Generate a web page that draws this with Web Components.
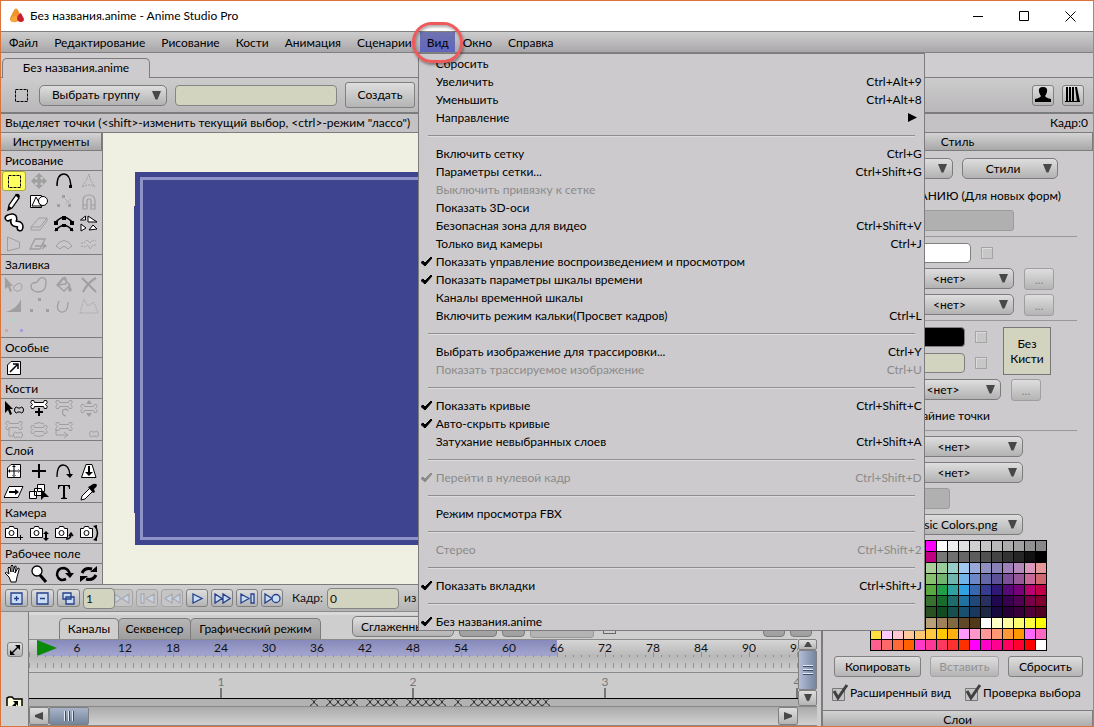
<!DOCTYPE html>
<html lang="ru">
<head>
<meta charset="utf-8">
<title>Без названия.anime - Anime Studio Pro</title>
<style>
body{margin:0;font:12px/18px Lato,"Open Sans",sans-serif;color:#000;background:#cfcdcf}
</style>
</head>
<body>
<studio-app></studio-app>
<script>
const base = `*{box-sizing:border-box}button,input,select{font:inherit;color:inherit;margin:0}button{cursor:default}
.btn{border:1px solid #808080;border-radius:3px;background:linear-gradient(#dedede,#b4b4b4);padding:0}`;
const define = (name, html) => customElements.define(name, class extends HTMLElement {
  constructor() {
    super();
    const t = document.createElement('template');
    t.innerHTML = `<style>${base}</style>` + (typeof html === 'function' ? html(this) : html);
    this.attachShadow({mode: 'open'}).append(t.content.cloneNode(true));
  }
});

/* ---------- small controls ---------- */
define('drop-select', el => `<style>
:host{display:block;position:relative;height:21px;flex:none}
select{appearance:none;width:100%;height:100%;border:1px solid #7c7c7c;border-radius:5px;background:linear-gradient(#dedede,#b2b2b2);text-align:center;text-align-last:center;padding:0 18px 0 var(--lead,4px);line-height:18px;display:block}
svg{position:absolute;right:6px;top:6px;pointer-events:none}
</style><select aria-label="${el.getAttribute('label')}"><option>${el.getAttribute('value') || ''}</option></select>
<svg width="9" height="9"><path d="M0 0h9L5.500 8.500h-2z" fill="#484848"/></svg>`);

define('header-strip', `<style>:host{display:block;height:19px;line-height:18px;text-align:center;border:1px solid #7c7c7c;border-left:0;background:linear-gradient(#d4d3d4,#a9a8a9);overflow:hidden}</style><slot></slot>`);

/* ---------- title bar ---------- */
define('title-bar', `<style>
:host{display:flex;align-items:center;height:30px;background:#fff;padding-left:8px;color:#000}
span{margin-left:5px;flex:1}
.w{width:46px;height:30px;border:0;background:none;padding:0;display:grid;place-items:center}
</style>
<svg width="16" height="16" viewBox="0 0 16 16"><path d="M1 10 5 2q2-3 4 0l3 6q-1 4-5 6-6 1-6-4z" fill="#f0932b"/><path d="M5 8q3-1 4 3-1 3-4 3-4 0-4-3z" fill="#f5a83c"/><path d="M12 5q1 2 3 6 0 3-3 3-4 0-4-4 1-4 4-5z" fill="#c8202c"/></svg>
<span>Без названия.anime - Anime Studio Pro</span>
<button class="w" aria-label="Свернуть"><svg width="11" height="11"><path d="M0 5.500h10" stroke="#000"/></svg></button>
<button class="w" aria-label="Развернуть"><svg width="11" height="11"><path d="M.5.500h9v9h-9z" fill="none" stroke="#000"/></svg></button>
<button class="w" aria-label="Закрыть"><svg width="11" height="11"><path d="m.5.500 10 10m0-10-10 10" stroke="#000"/></svg></button>`);

/* ---------- menus ---------- */
const viewMenu = [
 ['Сбросить'],['Увеличить','Ctrl+Alt+9'],['Уменьшить','Ctrl+Alt+8'],['Направление','▶'],null,
 ['Включить сетку','Ctrl+G'],['Параметры сетки...','Ctrl+Shift+G'],['Выключить привязку к сетке','','d'],['Показать 3D-оси'],
 ['Безопасная зона для видео','Ctrl+Shift+V'],['Только вид камеры','Ctrl+J'],['Показать управление воспроизведением и просмотром','','c'],
 ['Показать параметры шкалы времени','','c'],['Каналы временной шкалы'],['Включить режим кальки(Просвет кадров)','Ctrl+L'],null,
 ['Выбрать изображение для трассировки...','Ctrl+Y'],['Показать трассируемое изображение','Ctrl+U','d'],null,
 ['Показать кривые','Ctrl+Shift+C','c'],['Авто-скрыть кривые','','c'],['Затухание невыбранных слоев','Ctrl+Shift+A'],null,
 ['Перейти в нулевой кадр','Ctrl+Shift+D','cd'],null,['Режим просмотра FBX'],null,['Стерео','Ctrl+Shift+2','d'],null,
 ['Показать вкладки','Ctrl+Shift+J','c'],null,['Без названия.anime','','c']];
define('drop-menu', () => `<style>
:host{display:block;width:507px;border:1px solid #7c7c7c;background:#cccacc;color:#000}
ul{list-style:none;margin:0;padding:0}
li{height:18px}
button{display:flex;width:100%;height:18px;border:0;background:none;padding:1px 2px 0;line-height:17px;text-align:left;align-items:center}
i{width:15px;height:17px;flex:none;display:flex;align-items:center}
span{flex:1}
button:disabled{color:#8b8a8b}
hr{margin:0 9px;border:0;height:10px;border-bottom:1px solid #8f8f8f;box-shadow:0 1px #dddcdd}
.arrow{padding-right:5px}
</style><ul role="menu">${viewMenu.map(m => m ? `<li><button role="menuitem" ${(m[2]||'').includes('d')?'disabled':''}><i>${
 (m[2]||'').includes('c')?'<svg width="12" height="11"><path d="M0 6.500 2 5l2 2 6-6 1 1-7 8z" fill="currentColor" stroke="currentColor"/></svg>':''}</i><span>${m[0]}</span>${
 m[1]==='▶'?'<svg class="arrow" width="14" height="9"><path d="M0 0 9 4.500 0 9z"/></svg>':(m[1]||'')}</button></li>` : '<li><hr></li>').join('')}</ul>`);

define('menu-entry', `<style>
:host{display:block;position:relative}
button{border:0;background:none;height:20px;padding:0 8px;line-height:22px;display:block;white-space:nowrap}
:host([open]){z-index:5}
:host([open]) button{padding:0 6px 0 7px;background:linear-gradient(#6f73ae,#6165bd)}
.ring{display:none}
:host([open]) .ring{display:block;position:absolute;left:-8px;top:-10px;width:51px;height:41px;border:3px solid #ee5a5c;border-radius:20px;box-shadow:1px 2px 3px #0006,inset 1px 2px 3px #0005;pointer-events:none;z-index:2}
::slotted(drop-menu){position:absolute;left:-2px;top:21px}
</style><button><slot></slot></button><slot name="menu"></slot><div class="ring"></div>`);

define('menu-bar', `<style>
:host{display:flex;height:22px;border:1px solid #808080;border-width:1px 0;background:linear-gradient(#cecdce,#a9a7a9)}
nav{display:flex}
</style><nav>${['Файл','Редактирование','Рисование','Кости','Анимация','Сценарии','Вид','Окно','Справка'].map(n =>
 n==='Вид' ? `<menu-entry open>${n}<drop-menu slot="menu"></drop-menu></menu-entry>` : `<menu-entry>${n}</menu-entry>`).join('')}</nav>`);

/* ---------- tabs, options, status ---------- */
define('doc-tabs', `<style>
:host{display:flex;align-items:flex-end;height:25px;background:#cfcdcf;box-shadow:inset 0 -1px #7c7c7c;padding-left:1px}
button{height:20px;width:148px;border:1px solid #7c7c7c;border-bottom:0;border-radius:5px 5px 0 0;background:#cdcbcd;padding:0 0 2px}
</style><button role="tab" aria-selected="true">Без названия.anime</button>`);

define('tool-options', `<style>
:host{display:flex;align-items:center;height:36px;background:linear-gradient(#cdcccd,#b9b7b9);border-bottom:2px solid #7c7c7c;padding:0 9px 0 14px}
drop-select{width:128px;margin:0 8px 0 11px}
input{width:162px;height:21px;border:1px solid #858585;border-radius:4px;background:#d2d4c0}
.mk{width:70px;height:26px;margin-left:8px}
.sp{flex:1}
.ic{width:22px;height:21px;margin-left:8px;display:grid;place-items:center}
</style>
<svg width="13" height="13"><path d="M.5.500h12v12H.5z" fill="none" stroke="#000" stroke-dasharray="3 1"/></svg>
<drop-select label="Группа" value="Выбрать группу"></drop-select>
<input aria-label="Имя группы"><button class="btn mk">Создать</button><div class="sp"></div>
<button class="btn ic" aria-label="Персонаж"><svg width="16" height="16"><path d="M8 0q5 0 4 5-1 3-2 4 1 2 6 3v3H0v-3q5-1 6-3-1-1-2-4Q3 0 8 0z"/></svg></button>
<button class="btn ic" aria-label="Библиотека"><svg width="16" height="16"><path d="M1 0h2v15H1zm3 0h2v15H4zm3 0h2v15H7zm3 0h2l3 15h-3zM0 14h15v1H0z"/></svg></button>`);

define('status-line', `<style>
:host{display:flex;justify-content:space-between;height:18px;line-height:18px;background:#c4c2c4;padding:0 5px 0 4px}
</style><span>Выделяет точки (&lt;shift&gt;-изменить текущий выбор, &lt;ctrl&gt;-режим "лассо")</span><span>Кадр:0</span>`);

/* ---------- toolbox; every glyph is drawn on a 20 by 20 field ---------- */
const S = 'fill="none" stroke="currentColor"', W = 'fill="#fff" stroke="currentColor"';
const bone = y => `<path ${W} d="M3.500 ${y+1.5}q-3-2-1-4 3-1 3 2h9q0-3 3-2 2 2-1 4 3 2 1 4-3 1-3-2h-9q0 3-3 2-2-2 1-4z"/>`;
const boneD = y => bone(y).replace('#fff', 'none');
const cam = x => `<path ${W} d="M1.500 5.500h3l1-2h4l1 2h3v9h-12z"/><circle ${W} cx="7.500" cy="10" r="2.500"/>${x}`;
const small = (x, y) => `<path ${S} d="M${x} ${y}q1-2 3 0h2q2-2 3 0 1 2 0 4-1 2-3 0h-2q-2 2-3 0-1-2 0-4z"/>`;
const tools = [
 ['Рисование', [
  ['Выделение точек',`<path ${S} d="M4.500 4.500h12v12h-12z" stroke-dasharray="3 1"/>`,'s'],
  ['Перемещение точек',`<path fill="currentColor" d="m10 2 4 4h-2.500v2.500H14V6l4 4-4 4v-2.500h-2.500V14H14l-4 4-4-4h2.500v-2.500H6V14l-4-4 4-4v2.500h2.500V6H6z"/>`,'d'],
  ['Добавить точку',`<path ${S} stroke-width="1.500" d="M3 15Q3 3 10 3q6 0 7 12"/><path d="M15 14h3v3h-3z"/>`],
  ['Кривизна',`<path ${S} stroke-dasharray="2 1" d="M10 3 8 8l-5 8q7-4 13 0l-5-8z"/>`,'d'],
  ['Карандаш',`<path ${W} stroke-width="1.300" d="m12 3 3 3-7 10-4 2 1-5z"/><path d="m11 3 4 3 1-2q-1-3-4-2zM4 18l1-4 3 2z"/>`],
  ['Фигуры',`<path ${W} d="M1.500 3.500h11v12h-11z"/><path ${W} d="m3 14 4-9 5 9z"/><circle ${W} cx="14" cy="9" r="4.500"/>`],
  ['Удалить точку','<path fill="currentColor" d="M8 3h3v3H8zm-5 9h3v3H3zm11 0h3v3h-3z"/><path stroke="currentColor" stroke-dasharray="1 1" d="m11 7 6 5m0-5-6 5"/>','d'],
  ['Магнит',`<path ${S} stroke-width="1.200" d="M4 17V9q0-6 6-6t6 6v8h-4V9q0-2-2-2t-2 2v8zM4 13h4m4 0h4"/>`,'d'],
  ['Свободная рука',`<path ${S} stroke-width="7" stroke-linecap="round" d="M4 5q6-3 6 1-2 5 3 5 4 0 3 4"/><path fill="none" stroke="#fff" stroke-width="4" stroke-linecap="round" d="M4 5q6-3 6 1-2 5 3 5 4 0 3 4"/>`],
  ['Ластик',`<path ${S} d="m2 14 8-9h8l-7 9zv3h9l7-9V5"/>`,'d'],
  ['Точечная рука',`<path ${S} stroke-width="1.500" d="M1 10Q10-1 19 10M1 18q9-11 18 0"/><path d="M0 8h4v4H0zm16 0h4v4h-4zM8 3h4v4H8zM1 15h3v3H1zm7-4h4v3H8zm8 4h3v3h-3z"/>`],
  ['Разброс',`<path ${W} d="m1.500 7 5-4v4zM9 3l9 6H9zM2 11l5 4-5 3zm8 6 4-5 4 4z"/>`],
  ['Перспектива',`<path ${S} d="m3.500 3 12 5v6l-12 3z"/>`,'d'],
  ['Сдвиг',`<path ${S} stroke-width="1.300" d="M1 15 6 5h10l-5 10zM6 12h10m-3-3 4 3-4 3"/>`,'d'],
  ['Изгиб',`<path ${S} d="M2 12q8-11 16 0l-4 3q-4-5-8 0z"/>`,'d'],
  ['Шум',`<path ${S} stroke-dasharray="2 1" d="M2 9h3l3-3 3 3 3-3 3 1M2 12l4 1 3-2 2 4 3-4h4"/>`,'d']]],
 ['Заливка', [
  ['Выделение фигур',`<path fill="currentColor" d="m1 2 8 9H6l2 5-2 1-2-5-3 2z"/><path ${S} d="M10 11q3-1 3-2 4-2 5 2 0 6-6 5-4-2-2-5z"/>`,'d'],
  ['Создать фигуру',`<path ${S} stroke-width="1.300" d="M4 8q5 0 6-4 7-4 7 4 0 9-8 9-7-1-7-6 0-2 2-3z"/>`,'d'],
  ['Ведро',`<path ${S} stroke-width="1.300" d="m9 3 7 7-6 6-7-6zM4 10l8-1V4q-1-3-3 0z"/><path fill="currentColor" d="m15 9 3 6-2 2-2-2z"/>`,'d'],
  ['Удалить фигуру',`<path ${S} stroke-width="2" d="m3 3 14 14M17 3Q9 7 4 17"/>`,'d'],
  ['Толщина линии','<path fill="currentColor" d="M2 16h15V3Q14 12 2 16z"/>','d'],
  ['Скрыть ребро','<path fill="currentColor" d="M9 2h3v3H9zm-8 11h3v3H1zm16 0h3v3h-3z"/>','d'],
  ['Контур',`<path ${S} stroke-width="1.300" d="M5 5q-4 9 2 11 7 1 7-10"/>`,'d'],
  ['Кривая линии',`<path ${S} stroke-dasharray="1 1" d="m1 17 4-14 4 7 6-4 4 11z"/>`,'d'],
  ['Цвет точек','<path fill="#a7d9c6" d="M9 1h2v4H9z"/><path fill="#dba3a8" d="M1 12h3v3H1z"/><path fill="#a5a1d8" d="M16 12h3v3h-3z"/>','d']]],
 ['Особые', [['Скрипт',`<path ${W} d="M7 3.500h9.500v13h-13V7z"/><path ${S} stroke-width="1.500" d="m6 14 7-7M9 6h5v5"/>`]]],
 ['Кости', [
  ['Выделить кость',`<path d="m1 2 8 8H6l2 5-2 1-2-5-3 3z"/>${small(11,9)}`],
  ['Добавить кость',bone(4)+'<path d="M9 9h2v3h3v2h-3v3H9v-3H6v-2h3z"/>'],
  ['Повернуть кость',boneD(4)+`<path ${S} stroke-width="1.300" d="M14 12q-1-3-5-1-2 5 3 6"/>`,'d'],
  ['Масштаб кости',boneD(8)+'<path fill="currentColor" d="m10 1 3 4H7zm0 17 3-4H7z"/>','d'],
  ['Родитель кости',boneD(4)+`<path ${S} d="M5 8v8h5"/>${small(10,13)}`,'d'],
  ['Сила кости',boneD(8)+`<path ${S} d="M5 4q5-3 10 0M5 15q5 3 10 0"/>`,'d'],
  ['Смещение кости',boneD(5)+`<path ${S} d="M2 9v6h11m-3-3 4 3-4 3"/>`,'d'],
  ['Привязка точек',small(11,12),'d']]],
 ['Слой', [
  ['Переместить слой',`<path ${W} d="M7 3.500h9.500v13h-13V7z"/><path d="M5 9.500h10v1H5zM9.500 5h1v10h-1zM10 4l2 2H8zm0 12 2-2H8zM4 10l2-2v4zm12 0-2-2v4z"/>`],
  ['Точка привязки','<path d="M9 3h2v6h6v2h-6v6H9v-6H3V9h6z"/>'],
  ['Повернуть слой',`<path ${S} stroke-width="1.300" d="M3 16Q3 4 9 4t7 10"/><path d="M12 13h7l-3 4z"/>`],
  ['Масштаб слоя',`<path ${W} d="M7 3.500h6l4 13H2.500z"/><path d="M9 5h2v6h3l-4 4-4-4h3z"/>`],
  ['Сдвиг слоя',`<path ${W} d="M5 4.500h14l-5 11H0z"/><path d="M5 9h6V7l4 3-4 3v-2H5z"/>`],
  ['Выбор слоя',`<path ${W} d="M8.500 2.500h7v7h-7zM5.500 6.500h7v7h-7zM.5 9.500h7v7h-7z"/><path d="m12 7 8 8h-5l-3 3z"/>`],
  ['Текст','<path d="M4 3h12v4h-1q0-3-2-3h-2v11q0 1 2 1v1H7v-1q2 0 2-1V4H7Q5 4 5 7H4z"/>'],
  ['Пипетка',`<path ${W} d="m11 6 3 3-8 8-4 1 1-4z"/><path d="m9 5 2-1 3-2q3-1 4 1 0 2-3 4l1 3-2 1z"/>`]]],
 ['Камера', [
  ['Переместить камеру',cam('<path d="M16 12h1v2h2v1h-2v2h-1v-2h-2v-1h2z"/>')],
  ['Масштаб камеры',cam('<path d="m17 8 3 3h-2v4h2l-3 3-3-3h2v-4h-2z"/>')],
  ['Поворот камеры',cam(`<path ${S} stroke-width="1.500" d="M12 16q5 0 5-5m-2 2 2-3 2 3"/>`)],
  ['Наклон камеры',cam(`<path ${S} stroke-width="1.500" d="M16 3q5 7 0 14"/><path d="m14 3 4-1v4zm0 14 4 1v-4z"/>`)]]],
 ['Рабочее поле', [
  ['Рука',`<path ${W} d="m7 18-2-5-4-4q1-2 4 1L4 4q1-2 2 0l1 4V2q1-2 2 0v6l2-6q2 0 1 2l-1 5 3-5q2 0 1 2l-2 7-1 5z"/>`],
  ['Лупа',`<path stroke="currentColor" stroke-width="3" d="m11 11 6 7"/><circle ${W} stroke-width="1.300" cx="8" cy="7" r="5"/>`],
  ['Поворот поля',`<path ${S} stroke-width="2.500" d="M12 15q-7 3-9-4Q3 4 10 4q5 1 6 7"/><path d="M11 9h9l-4 5z"/>`],
  ['Сброс поля',`<path ${S} stroke-width="3" d="M3 9q3-6 10-4m4 6q-3 6-10 4"/><path d="M11 8h7V2zM9 12H1v6z"/>`]]]];
define('tool-box', () => `<style>
:host{display:block;width:102px;border-right:1px solid #7c7c7c;background:#c9c7c9}
h2{font:inherit;margin:0;height:20px;padding-left:4px;line-height:19px;border-bottom:1px solid #7c7c7c}
section:not(:last-child){box-shadow:inset 0 -1px #7c7c7c}
div{display:grid;grid-template-columns:repeat(4,25px);grid-auto-rows:21px;padding-left:1px}
button{width:24px;height:20px;border:0;background:none;padding:0;display:grid;place-items:center;color:#000}
button:disabled{color:#a09fa0}
.s{background:#ffff60;border-radius:3px;box-shadow:0 0 0 1px #aaa83f inset}
svg{display:block}
</style><header-strip>Инструменты</header-strip>${tools.map(([n, list]) => `<section><h2>${n}</h2><div>${list.map(([t, g, f]) =>
 `<button aria-label="${t}" class="${f==='s'?'s':''}" ${f==='d'?'disabled':''}><svg width="20" height="20" viewBox="0 0 20 20">${g}</svg></button>`).join('')}</div></section>`).join('')}`);

define('work-canvas', `<style>
:host{display:block;position:relative;background:#f0f0e2;overflow:hidden}
.doc{position:absolute;inset:39px 32px;background:#3e4490;padding:5px}
.doc::before{content:"";position:absolute;left:-1px;top:34px;bottom:32px;width:1px;background:#3e4490}
.safe{height:100%;border:3px solid #8f94c8}
</style><div class="doc"><div class="safe"></div></div>`);

/* ---------- playback ---------- */
const P = 'fill="#c9dcf4" stroke="currentColor" stroke-width="1.300"';
const play = [
 ['В начало',`<path ${P} d="M1 2v9l6-4.500zM15 2v9L8 6.500z"/>`,1],['Кадр назад',`<path ${P} d="M2 2h3v9H2zM15 2v9L7 6.500z"/>`,1],
 ['Назад',`<path ${P} d="M8 2v9L1 6.500zM16 2v9L9 6.500z"/>`,1],['Воспроизвести',`<path ${P} d="M4 2v9l9-4.500z"/>`],
 ['Вперёд',`<path ${P} d="M1 2v9l7-4.500zM9 2v9l7-4.500z"/>`],['Кадр вперёд',`<path ${P} d="M2 2v9l8-4.500zM12 2h3v9h-3z"/>`],
 ['В конец',`<path ${P} d="M1 2v9l7-4.500z"/><circle ${P} cx="12" cy="6.500" r="4"/>`]];
define('playback-bar', () => `<style>
:host{display:flex;align-items:center;height:27px;background:linear-gradient(#d2d1d2,#b5b4b5);border-top:1px solid #7c7c7c;padding-left:4px;color:#24408c}
.btn{width:23px;height:18px;margin-right:3px;display:grid;place-items:center;flex:none}
.btn:disabled{color:#a0a0a8;border-color:#a5a4a5;background:#c6c5c6}
.btn:disabled svg{opacity:.7}
input{height:21px;border:1px solid #858585;border-radius:4px;background:#d2d4c0;color:#111;padding:0 2px}
.n{width:32px;margin-right:-4px;z-index:1;position:relative}
.f{width:72px;margin:0 5px 0 4px}
label,span{color:#111}
.g{display:flex;margin-right:6px}
.g .btn{width:22px}
</style>
<button class="btn" aria-label="Добавить вид"><svg width="13" height="13"><path ${P} d="M1 1h11v11H1zM6.500 4v5M4 6.500h5"/></svg></button>
<button class="btn" aria-label="Убрать вид"><svg width="13" height="13"><path ${P} d="M1 1h11v11H1zM4 6.500h5"/></svg></button>
<button class="btn" aria-label="Дублировать вид"><svg width="13" height="13"><path ${P} d="M1 1h8v6H1zM4 5h8v7H4z"/></svg></button>
<input class="n" aria-label="Шаг" value="1">
<div class="g">${play.map(([n, g, d]) => `<button class="btn" aria-label="${n}" ${d?'disabled':''}><svg width="17" height="13">${g}</svg></button>`).join('')}</div>
<label for="fr">Кадр:</label><input class="f" id="fr" value="0"><span>из</span>`);

/* ---------- timeline ---------- */
const FR = 8;
const marks = [314,330,338,346,354,370,378,386,394,410,418,426,434,442,458,474,482,490,498,506,514,522,530,538,546].map(x => x - 29);
const range = (n, f) => Array.from({length: n}, (_, i) => f(i)).join('');
define('time-ruler', () => `<style>
:host{display:block;overflow:hidden;background:#cccbcc}
svg{display:block;width:100%;height:67px}
text{text-anchor:middle;fill:#111}
.sec{fill:#777}
</style><svg>
<defs><linearGradient id="b" x2="0" y2="1"><stop stop-color="#8488b8"/><stop offset="1" stop-color="#a5a6d0"/></linearGradient>
<linearGradient id="g" x2="0" y2="1"><stop stop-color="#d8d7d8"/><stop offset=".5" stop-color="#b9b8b9"/><stop offset="1" stop-color="#d2d1d2"/></linearGradient></defs>
<rect width="100%" height="34" fill="url(#g)"/><rect x="8" width="520" height="17" fill="url(#b)"/>
<path d="M0 .5h2000M0 33.500h2000" stroke="#8c8b8c"/>
<path d="M8 1v16l20-8z" fill="#0a8a0a"/>
${range(250, i => `<path stroke="#929192" d="M${i*FR+.5} ${i%6?16:13}v${i%6?2:5}m0 6v5"/>`)}
${range(17, i => i ? `<text x="${i*48}" y="13">${i*6}</text>` : '')}
${range(5, i => i ? `<text class="sec" x="${i*192}" y="47">${i}</text><path stroke="#777" stroke-width="2" d="M${i*192} 49v10"/>` : '')}
<rect y="60" width="100%" height="7" fill="#b3b2b3"/>
<path d="M0 59.500h2000" stroke="#000"/>
${marks.map(x => `<path fill="none" stroke="#222" d="M${x-4} 59.500c3 0 5 7 8 7m0-7c-3 0-5 7-8 7"/>`).join('')}
</svg>`);

define('time-line', `<style>
:host{display:grid;grid-template-columns:28px minmax(0,1fr);height:115px;background:#cfcecf;border-top:1px solid #8c8b8c;box-shadow:inset 0 3px #dad9da;border-right:1px solid #7c7c7c}
.side{border-right:1px solid #7c7c7c;display:flex;flex-direction:column;align-items:center;justify-content:space-between;padding:30px 0 20px;background:#cfcecf}
.side .btn{width:16px;height:15px;display:grid;place-items:center}
.main{display:grid;grid-template-columns:minmax(0,1fr) 19px;padding-right:4px;align-content:start}
.tabs{grid-column:1/3;display:flex;align-items:flex-end;height:27px;padding-left:31px}
.tabs button{height:21px;border:1px solid #7c7c7c;border-radius:5px 5px 0 0;background:linear-gradient(#b7b6b7,#9f9e9f);padding:0;border-bottom:0;margin-left:-1px;flex:none}
.tabs .on{background:#cfcecf}
.tabs drop-select{width:102px;margin:0 5px 2px 31px}
.tabs .btn.x{height:20px;width:38px;border:1px solid #7c7c7c;border-radius:4px;margin:0 5px 2px 0}
.ghost{width:73px;height:20px;border:1px solid #999;border-radius:3px;background:#b5b4b5;margin-bottom:1px}
.tick{appearance:none;width:14px;height:14px;border:1px solid #666;margin:0 147px 5px 9px}
.v{display:flex;flex-direction:column}
.v .btn,.h .btn{border-radius:2px;display:grid;place-items:center}
.v .a{height:11px}.v .z{height:16px}
.v .t{flex:1;background:linear-gradient(90deg,#b4bcd8,#74859c)}
.h{grid-column:1/3;display:flex;height:20px;padding-right:19px;border:1px solid #888;border-width:1px 0;background:linear-gradient(#acabac,#d2d1d2)}
.h .a{width:20px}.h .t{width:40px;background:linear-gradient(#a9b3c8,#74859c)}
.h .sp{flex:1}
</style>
<div class="side"><button class="btn" aria-label="Развернуть шкалу"><svg width="12" height="12"><path d="M3 9 9 3" stroke="#000" stroke-width="1.500"/><path d="M6 1h5v5zM1 6v5h5z"/></svg></button>
<svg width="18" height="10"><path d="M1 10V2l2-1h3l2 2h8v7" fill="#ffffe0" stroke="#000" stroke-width="1.500"/><path d="M7 5h5v5zM6 10l4-4v4z"/></svg></div>
<div class="main">
<div class="tabs" role="tablist"><button class="on" role="tab" style="width:60px">Каналы</button><button role="tab" style="width:73px">Секвенсер</button><button role="tab" style="width:131px">Графический режим</button>
<drop-select label="Интерполяция" value="Сглаженный"></drop-select><button class="btn x" aria-label="Сетка"></button><button class="btn x" style="width:23px" aria-label="Калька"></button><div class="ghost"></div><input class="tick" type="checkbox" aria-label="Калька включена"><button class="btn x" style="width:22px" aria-label="Уменьшить масштаб"></button><button class="btn x" style="width:22px" aria-label="Увеличить масштаб"></button></div>
<time-ruler></time-ruler>
<div class="v"><button class="btn a" aria-label="Вверх"><svg width="8" height="5"><path d="m0 5 3-5h2l3 5z" fill="#484848"/></svg></button><button class="btn t" aria-label="Ползунок"><svg width="10" height="12"><path d="M0 1.500h10m-10 4h10m-10 4h10" stroke="#e4eaf4"/><path d="M0 2.500h10m-10 4h10m-10 4h10" stroke="#3d4c6a"/></svg></button><button class="btn z" aria-label="Вниз"><svg width="8" height="8"><path d="M0 0h8L5 7H3z" fill="#484848"/></svg></button></div>
<div class="h"><button class="btn a" aria-label="Влево"><svg width="8" height="8"><path d="M8 0v8L0 5V3z" fill="#484848"/></svg></button><button class="btn t" aria-label="Ползунок"><svg width="12" height="10"><path d="M1.500 0v10m4-10v10m4-10v10" stroke="#e4eaf4"/><path d="M2.500 0v10m4-10v10m4-10v10" stroke="#3d4c6a"/></svg></button><div class="sp"></div><button class="btn a" aria-label="Вправо"><svg width="8" height="8"><path d="M0 0v8l8-3V3z" fill="#484848"/></svg></button></div>
</div>`);

/* ---------- style panel ---------- */
const colors = s => s.split(' ').map(c => '#' + c);
const hidden = Array(5).fill('#ccc');
const pal = [
 [...hidden, ...colors('f0f fff eee e0e0e0 d0d0d0 c4c4c4 b8b8b8 acacac a0a0a0 909090 888')],
 [...hidden, ...colors('c00080 777 707070 666 5c5c5c 505050 444 333 262626 111 000')],
 [...hidden, ...colors('a8d098 98cc98 98ccc8 a0c8f0 98a8d8 9090c0 8880b8 a080b8 b488b8 dc98bc e49898')],
 [...hidden, ...colors('88c070 70b470 70b4b0 70b4e8 6c88c8 6468a8 5c5098 7c5098 985898 c86898 d06870')],
 [...hidden, ...colors('58a840 20a048 30a0a0 30a0e0 3868b0 383c90 301878 580878 780078 b80070 c00048')],
 [...hidden, ...colors('387030 186c2c 206c6c 2070a0 204878 283060 200850 380050 500050 780048 800030')],
 [...hidden, ...colors('285020 104c20 185050 185070 183860 202848 180840 280038 380038 500038 500020')],
 [...hidden, ...colors('b8a078 a08058 806840 604828 503818 fff ffffc8 ffffa0 ffff70 ffff40 ff0')],
 colors('ffe040 ffc8ff ffc8d0 ffc898 ffc870 ffc840 ffc800 ffb010 ff98ff ff98c8 ff9898 ff9870 ff9838 ff9800 ff68ff ff68c0'),
 colors('ff6090 ff6868 ff6838 ff6000 ff38c8 ff3898 ff3860 ff3030 ff3000 f0f ff00c8 ff0090 ff0060 ff0030 f00 fff')];
define('color-grid', () => `<style>
:host{display:grid;grid-template-columns:repeat(16,10px);grid-auto-rows:10px;gap:1px;padding:1px;background:#000;width:177px;flex:none}
</style>${pal.flat().map(c => `<i style="background:${c}"></i>`).join('')}`);

define('check-label', `<style>
:host{display:block}
label{display:flex;align-items:center;gap:1px;height:18px;white-space:nowrap}
input{appearance:none;width:18px;height:18px;background:url("data:image/svg+xml,%3Csvg xmlns='http://www.w3.org/2000/svg' width='18' height='18'%3E%3Cpath d='M1.500 4.500h12v12h-12z' fill='%23c4c4c4' stroke='%23777'/%3E%3Cpath d='M3 7l4 7L16 1' fill='none' stroke='%23404040' stroke-width='3'/%3E%3C/svg%3E")}
</style><label><input type="checkbox" checked><slot></slot></label>`);

define('style-panel', `<style>
:host{display:block;width:271px;flex:none;border-left:1px solid #7c7c7c;background:#cccacc;overflow:hidden}
.row{display:flex;align-items:center;height:21px;gap:10px;margin-bottom:5px;padding-left:52px}
.row.a{margin:7px 0 0;gap:9px;padding-left:12px}
.row:not(.a) drop-select{--lead:28px}
.note{height:31px;line-height:33px;text-align:right;padding-right:32px}
hr{margin:5px 16px 5px 12px;border:0;border-top:1px solid #999899}
.off{width:139px;height:21px;border:1px solid #9c9b9c;border-radius:3px;background:#b1b0b1;margin:0}
.sw{height:20px;border:1px solid #808080;border-radius:4px;padding:0}
.c{appearance:none;width:12px;height:12px;border:1px solid #a5a4a5;background:#c8c7c8;box-shadow:inset 1px 1px #dddcdd}
.dots{width:30px;height:22px;color:#888;border-color:#a09fa0;line-height:22px}
.brush{display:grid;grid-template-columns:auto 1fr;column-gap:16px;margin-top:6px}
.big{width:48px;height:48px;border:1px solid #777;background:#d2d4c0;padding:4px 0;line-height:15px}
.brush .row{margin-bottom:6px;height:20px}
.pts{height:30px;line-height:32px;text-align:right;padding-right:103px}
.btns{display:flex;gap:9px;margin:5px 10px 7px 11px}
.btns button{height:21px}
.btns button:disabled{color:#929192;border-color:#a5a4a5}
.checks{display:flex;gap:13px;padding-left:8px;margin-bottom:8px}
</style>
<header-strip>Стиль</header-strip>
<div class="row a"><drop-select label="Действие" style="width:118px"></drop-select><drop-select label="Стили" value="Стили" style="width:96px"></drop-select></div>
<div class="note">ПО УМОЛЧАНИЮ (Для новых форм)</div>
<div class="row" style="margin:0"><input class="off" disabled aria-label="Имя"></div>
<hr>
<div class="row"><button class="sw" style="width:96px;background:#fff" aria-label="Цвет заливки"></button><input class="c" type="checkbox" aria-label="Заливка"></div>
<div class="row"><drop-select label="Эффект 1" value="&lt;нет&gt;" style="width:139px"></drop-select><button class="btn dots">...</button></div>
<div class="row" style="margin:0"><drop-select label="Эффект 2" value="&lt;нет&gt;" style="width:139px"></drop-select><button class="btn dots">...</button></div>
<hr>
<div class="brush"><div>
<div class="row"><button class="sw" style="width:90px;background:#000" aria-label="Цвет линии"></button><input class="c" type="checkbox" aria-label="Линия"></div>
<div class="row"><input class="sw" style="width:90px;background:#d2d4c0" aria-label="Толщина"><input class="c" type="checkbox" aria-label="Толщина линии"></div>
</div><button class="big">Без Кисти</button></div>
<div class="row" style="margin:0"><drop-select label="Кисть" value="&lt;нет&gt;" style="width:126px"></drop-select><button class="btn dots">...</button></div>
<div class="pts">Крайние точки</div>
<hr style="margin-top:0">
<div class="row"><drop-select label="Эффект линии 1" value="&lt;нет&gt;" style="width:148px"></drop-select></div>
<div class="row"><drop-select label="Эффект линии 2" value="&lt;нет&gt;" style="width:148px"></drop-select></div>
<div class="row"><input class="off" style="width:75px" disabled aria-label="Масштаб"></div>
<div class="row"><drop-select label="Палитра" value="Basic Colors.png" style="width:148px"></drop-select></div>
<div style="padding-left:47px"><color-grid></color-grid></div>
<div class="btns"><button class="btn" style="flex:87">Копировать</button><button class="btn" style="flex:68" disabled>Вставить</button><button class="btn" style="flex:75">Сбросить</button></div>
<div class="checks"><check-label>Расширенный вид</check-label><check-label>Проверка выбора</check-label></div>
<header-strip>Слои</header-strip>`);

/* ---------- window ---------- */
define('studio-app', `<style>
:host{box-sizing:border-box;display:flex;flex-direction:column;height:100vh;border:1px solid #d8743c;overflow:hidden}
title-bar,menu-bar,doc-tabs,tool-options,status-line,playback-bar,time-line{flex:none}
main{flex:1;display:flex;min-height:0}
.left{flex:1;min-width:0;display:flex;flex-direction:column}
.stage{flex:1;display:flex;min-height:0;overflow:hidden}
.stage tool-box{flex:none}
work-canvas{flex:1;border-top:1px solid #7c7c7c}
</style>
<title-bar></title-bar><menu-bar></menu-bar><doc-tabs></doc-tabs><tool-options></tool-options><status-line></status-line>
<main><div class="left"><div class="stage"><tool-box></tool-box><work-canvas></work-canvas></div><playback-bar></playback-bar><time-line></time-line></div><style-panel></style-panel></main>`);
</script>
</body>
</html>
